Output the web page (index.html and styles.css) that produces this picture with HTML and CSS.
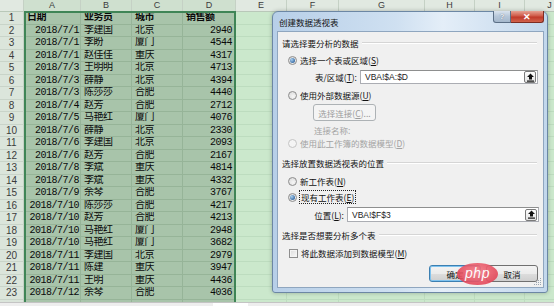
FILE: index.html
```html
<!DOCTYPE html>
<html>
<head>
<meta charset="utf-8">
<link rel="stylesheet" href="styles.css">
</head>
<body>
<div class="app">
  <div class="sheet">
    <div class="r hdr"><i class="corner"></i><i class="sel">A</i><i class="sel">B</i><i class="sel">C</i><i class="sel">D</i><i>E</i><i>F</i><i>G</i><i>H</i><i>I</i><i>J</i></div>
    <div class="r bold"><i class="rh">1</i><i class="s">日期</i><i class="s">业务员</i><i class="s">城市</i><i class="s">销售额</i><i></i><i></i><i></i><i></i><i></i><i></i></div>
    <div class="r"><i class="rh">2</i><i class="s a">2018/7/1</i><i class="s">李建国</i><i class="s">北京</i><i class="s d">2940</i><i></i><i></i><i></i><i></i><i></i><i></i></div>
    <div class="r"><i class="rh">3</i><i class="s a">2018/7/1</i><i class="s">李盼</i><i class="s">厦门</i><i class="s d">4544</i><i></i><i></i><i></i><i></i><i></i><i></i></div>
    <div class="r"><i class="rh">4</i><i class="s a">2018/7/1</i><i class="s">赵佳佳</i><i class="s">重庆</i><i class="s d">4317</i><i></i><i></i><i></i><i></i><i></i><i></i></div>
    <div class="r"><i class="rh">5</i><i class="s a">2018/7/3</i><i class="s">王明明</i><i class="s">北京</i><i class="s d">4713</i><i></i><i></i><i></i><i></i><i></i><i></i></div>
    <div class="r"><i class="rh">6</i><i class="s a">2018/7/3</i><i class="s">薛静</i><i class="s">北京</i><i class="s d">4394</i><i></i><i></i><i></i><i></i><i></i><i></i></div>
    <div class="r"><i class="rh">7</i><i class="s a">2018/7/3</i><i class="s">陈莎莎</i><i class="s">合肥</i><i class="s d">4440</i><i></i><i></i><i></i><i></i><i></i><i></i></div>
    <div class="r"><i class="rh">8</i><i class="s a">2018/7/4</i><i class="s">赵芳</i><i class="s">合肥</i><i class="s d">2712</i><i></i><i></i><i></i><i></i><i></i><i></i></div>
    <div class="r"><i class="rh">9</i><i class="s a">2018/7/5</i><i class="s">马艳红</i><i class="s">厦门</i><i class="s d">4076</i><i></i><i></i><i></i><i></i><i></i><i></i></div>
    <div class="r"><i class="rh">10</i><i class="s a">2018/7/6</i><i class="s">薛静</i><i class="s">北京</i><i class="s d">2330</i><i></i><i></i><i></i><i></i><i></i><i></i></div>
    <div class="r"><i class="rh">11</i><i class="s a">2018/7/6</i><i class="s">李建国</i><i class="s">北京</i><i class="s d">2093</i><i></i><i></i><i></i><i></i><i></i><i></i></div>
    <div class="r"><i class="rh">12</i><i class="s a">2018/7/6</i><i class="s">赵芳</i><i class="s">合肥</i><i class="s d">2167</i><i></i><i></i><i></i><i></i><i></i><i></i></div>
    <div class="r"><i class="rh">13</i><i class="s a">2018/7/8</i><i class="s">李斌</i><i class="s">重庆</i><i class="s d">4814</i><i></i><i></i><i></i><i></i><i></i><i></i></div>
    <div class="r"><i class="rh">14</i><i class="s a">2018/7/8</i><i class="s">李斌</i><i class="s">重庆</i><i class="s d">4332</i><i></i><i></i><i></i><i></i><i></i><i></i></div>
    <div class="r"><i class="rh">15</i><i class="s a">2018/7/9</i><i class="s">余琴</i><i class="s">合肥</i><i class="s d">3767</i><i></i><i></i><i></i><i></i><i></i><i></i></div>
    <div class="r"><i class="rh">16</i><i class="s a">2018/7/10</i><i class="s">陈莎莎</i><i class="s">合肥</i><i class="s d">4217</i><i></i><i></i><i></i><i></i><i></i><i></i></div>
    <div class="r"><i class="rh">17</i><i class="s a">2018/7/10</i><i class="s">赵芳</i><i class="s">合肥</i><i class="s d">4213</i><i></i><i></i><i></i><i></i><i></i><i></i></div>
    <div class="r"><i class="rh">18</i><i class="s a">2018/7/10</i><i class="s">马艳红</i><i class="s">厦门</i><i class="s d">2948</i><i></i><i></i><i></i><i></i><i></i><i></i></div>
    <div class="r"><i class="rh">19</i><i class="s a">2018/7/10</i><i class="s">马艳红</i><i class="s">厦门</i><i class="s d">3682</i><i></i><i></i><i></i><i></i><i></i><i></i></div>
    <div class="r"><i class="rh">20</i><i class="s a">2018/7/11</i><i class="s">李建国</i><i class="s">北京</i><i class="s d">2979</i><i></i><i></i><i></i><i></i><i></i><i></i></div>
    <div class="r"><i class="rh">21</i><i class="s a">2018/7/11</i><i class="s">陈建</i><i class="s">重庆</i><i class="s d">3947</i><i></i><i></i><i></i><i></i><i></i><i></i></div>
    <div class="r"><i class="rh">22</i><i class="s a">2018/7/11</i><i class="s">王明</i><i class="s">重庆</i><i class="s d">4436</i><i></i><i></i><i></i><i></i><i></i><i></i></div>
    <div class="r"><i class="rh">23</i><i class="s a">2018/7/12</i><i class="s">余琴</i><i class="s">合肥</i><i class="s d">4036</i><i></i><i></i><i></i><i></i><i></i><i></i></div>
    <div class="r"><i class="rh"></i><i class="s"></i><i class="s"></i><i class="s"></i><i class="s"></i><i></i><i></i><i></i><i></i><i></i><i></i></div>
  </div>
  <div class="footer"><span class="tab"></span></div>

  <div class="selection"></div>

  <div class="dialog">
    <div class="titlebar">
      <span class="title">创建数据透视表</span>
      <div class="tbtns"><span class="help">?</span><span class="close">✕</span></div>
    </div>
    <div class="content">
      <div class="sec s1"><span>请选择要分析的数据</span><b class="groove"></b></div>
      <div class="opt o1"><span class="radio on"></span><span>选择一个表或区域(<u>S</u>)</span></div>
      <div class="field f1"><label>表/区域(<u>T</u>):</label><div class="input">VBA!$A:$D<span class="rbtn"><svg width="9" height="9" viewBox="0 0 9 9"><path d="M4.5 0.5 L1 4 H3 V6.5 H6 V4 H8 Z" fill="#111"/><rect x="1" y="7.5" width="7" height="1.2" fill="#111"/></svg></span></div></div>
      <div class="opt o2"><span class="radio"></span><span>使用外部数据源(<u>U</u>)</span></div>
      <div class="btnrow"><span class="btn dis">选择连接(<u>C</u>)...</span></div>
      <div class="conn">连接名称:</div>
      <div class="opt dis o3"><span class="radio"></span><span>使用此工作簿的数据模型(<u>D</u>)</span></div>
      <div class="sec s2"><span>选择放置数据透视表的位置</span><b class="groove"></b></div>
      <div class="opt o4"><span class="radio"></span><span>新工作表(<u>N</u>)</span></div>
      <div class="opt o5"><span class="radio on"></span><span class="focus">现有工作表(<u>E</u>)</span></div>
      <div class="field f2"><label>位置(<u>L</u>):</label><div class="input">VBA!$F$3<span class="rbtn"><svg width="9" height="9" viewBox="0 0 9 9"><path d="M4.5 0.5 L1 4 H3 V6.5 H6 V4 H8 Z" fill="#111"/><rect x="1" y="7.5" width="7" height="1.2" fill="#111"/></svg></span></div></div>
      <div class="sec s3"><span>选择是否想要分析多个表</span><b class="groove"></b></div>
      <div class="opt o6"><span class="check"></span><span>将此数据添加到数据模型(<u>M</u>)</span></div>
      <div class="actions"><span class="btn ok">确定</span><span class="btn">取消</span></div>
      <svg class="grip" width="9" height="9" viewBox="0 0 9 9"><g fill="#9aa5b1"><rect x="7" y="1" width="1" height="1"/><rect x="5" y="3" width="1" height="1"/><rect x="7" y="3" width="1" height="1"/><rect x="3" y="5" width="1" height="1"/><rect x="5" y="5" width="1" height="1"/><rect x="7" y="5" width="1" height="1"/><rect x="1" y="7" width="1" height="1"/><rect x="3" y="7" width="1" height="1"/><rect x="5" y="7" width="1" height="1"/><rect x="7" y="7" width="1" height="1"/></g></svg>
    </div>
  </div>

  <div class="php">php</div>
</div>
</body>
</html>
```

FILE: styles.css
```css
* { box-sizing: border-box; margin: 0; padding: 0; }
html, body { width: 554px; height: 306px; overflow: hidden; background: #cbe8cc; }
body { font-family: "Noto Sans CJK SC", sans-serif; }

.app { position: relative; width: 554px; height: 306px; display: flex; flex-direction: column; }

/* ---------- sheet ---------- */
.sheet {
  height: 302px; overflow: hidden; background: #cbe8cc;
  font: 10px "Liberation Mono", "Noto Sans CJK SC", monospace;
  letter-spacing: -0.5px; color: #0a0a0a;
}
.r {
  display: grid;
  grid-template-columns: 24px 57px 51px 51px 53px 51px 52px 86px 50px 50px 50px;
  height: 12.5px;
}
.r > i {
  display: block; font-style: normal; height: 12.5px; line-height: 12px;
  border-right: 1px solid #bddcbf; border-bottom: 1px solid #bddcbf;
  white-space: nowrap; overflow: hidden; padding: 0 3px;
}
.r.hdr { height: 12px; }
.r.hdr > i {
  height: 12px; line-height: 12px; background: #e1e9e1;
  border-right-color: #c5d1c5; border-bottom-color: #b9c8b9;
  text-align: center; font: 9px "Liberation Sans", sans-serif; letter-spacing: 0; color: #3c3c3c;
}
.r.hdr > i.sel { background: #cfe0cf; }
.r > i.rh {
  background: #dbe5db; border-right-color: #c5d1c5; border-bottom-color: #c9d4c9;
  text-align: center; padding: 0; font: 10px "Liberation Sans", sans-serif;
  letter-spacing: 0; color: #3c3c3c;
}
.r > i.s { background: #a8c4aa; border-color: #96b498; }
.r > i.a { text-align: right; padding-right: 1px; }
.r > i.d { text-align: right; padding-right: 3px; }
.bold > i.s { font-weight: bold; }

.footer { height: 4px; background: #eeeeee; border-top: 1px solid #c4c4c4; display: flex; padding-left: 213px; }
.footer .tab { width: 35px; background: #fff; }

.selection {
  position: absolute; left: 24px; top: 11px; width: 212px; height: 291px;
  border: 2px solid #3f8556; border-bottom: none; pointer-events: none;
}

/* ---------- dialog ---------- */
.dialog {
  position: absolute; left: 272px; top: 11px; width: 276px; height: 282px;
  border: 1px solid #6c87a4; border-radius: 6px 6px 3px 3px;
  background: linear-gradient(to right, #b7cfe8, #cfe0f1 45%, #e4eef8 62%, #c2d7ec);
  padding: 0 3px 4px 4px;
  display: flex; flex-direction: column;
  box-shadow: 0 0 4px rgba(0, 0, 0, 0.25);
}
.titlebar { height: 19px; position: relative; display: flex; align-items: center; padding-left: 2px; }
.title { font-size: 8.5px; color: #111; line-height: 12px; }
.tbtns { position: absolute; right: 0; top: -1px; display: flex; }
.tbtns span {
  height: 12px; display: flex; align-items: center; justify-content: center;
  border: 1px solid #5b6f86; border-top: none; color: #fff;
  font: bold 8px "Liberation Sans", sans-serif;
}
.help {
  width: 18px; border-radius: 0 0 0 3px;
  background: linear-gradient(#d9e3ee, #b5c6d8 50%, #a5b8cc);
  color: #eef3f8 !important; text-shadow: 0 0 1px #4d5d70;
}
.close {
  width: 33px; border-left: none !important; border-radius: 0 0 3px 0;
  border-color: #7d2c22 !important;
  background: linear-gradient(#e6a293, #cf5a48 45%, #c0392a 55%, #d1634c);
  font-size: 9px !important;
}

.content {
  position: relative; flex: 1; background: #f0f0f0; border: 1px solid #8fa6bf;
  font-size: 8.5px; line-height: 12px; color: #111;
  display: flex; flex-direction: column;
}
.content u { text-decoration: underline; text-underline-offset: 1px; }

.sec { display: flex; align-items: center; height: 12px; padding-left: 4px; padding-right: 6px; }
.sec .groove { flex: 1; height: 2px; border-top: 1px solid #d5d5d5; border-bottom: 1px solid #fff; margin-left: 3px; }
.s1 { margin-top: 5px; }
.s2 { margin-top: 8px; }
.s3 { margin-top: 7px; }

.opt { display: flex; align-items: center; height: 12px; padding-left: 10px; gap: 3px; }
.o1 { margin-top: 5px; }
.o2 { margin-top: 5px; }
.o3 { margin-top: 1px; }
.o4 { margin-top: 6px; }
.o5 { margin-top: 4px; }
.o6 { margin-top: 6px; padding-left: 11px; }

.radio {
  width: 9px; height: 9px; border-radius: 50%; border: 1px solid #8c8c8c;
  background: radial-gradient(circle at 60% 65%, #f6f6f6, #d8d8d8);
  display: flex; align-items: center; justify-content: center;
}
.radio.on::after {
  content: ""; width: 5px; height: 5px; border-radius: 50%;
  background: radial-gradient(circle at 35% 35%, #a9d0f0, #3d6fa7 70%, #274f7f);
}
.opt.dis { color: #a3a3a3; }
.opt.dis .radio { border-color: #c4c4c4; background: #f4f4f4; }

.check {
  width: 9px; height: 9px; border: 1px solid #8e8e8e;
  background: linear-gradient(135deg, #dcdcdc, #fafafa);
  box-shadow: inset 0 0 0 1px #f4f4f4;
}
.focus { outline: 1px dotted #222; outline-offset: 0; padding: 0 1px; }

.field { display: flex; align-items: center; }
.field label { text-align: right; padding-right: 3px; }
.f1 { margin-top: 4px; height: 14px; }
.f1 label { width: 82px; }
.f1 .input { width: 178px; }
.f2 { margin-top: 4px; height: 15px; }
.f2 label { width: 69px; }
.f2 .input { width: 192px; }
.input {
  height: 100%; background: #fff; border: 1px solid #abadb3; border-top-color: #8e8f8f;
  display: flex; align-items: center; padding-left: 4px; position: relative;
  font-family: "Liberation Sans", sans-serif; font-size: 8.5px; color: #222;
}
.rbtn {
  position: absolute; right: 1px; top: 50%; transform: translateY(-50%);
  width: 12px; height: 12px; border: 1px solid #7a7a7a; border-radius: 2px;
  background: linear-gradient(#fdfdfd, #e3e3e3);
  display: flex; align-items: center; justify-content: center;
}

.btnrow { margin-top: 3px; padding-left: 35px; display: flex; }
.btn {
  height: 17px; display: flex; align-items: center; justify-content: center;
  border: 1px solid #707070; border-radius: 3px;
  background: linear-gradient(#f3f3f3, #ebebeb 50%, #dddddd 51%, #cfcfcf);
}
.btn.dis { width: 63px; border-color: #adb2b5; background: #f4f4f4; color: #9c9c9c; }
.conn { margin-top: 3px; padding-left: 36px; color: #a3a3a3; height: 12px; }

.actions { margin-top: 6px; display: flex; justify-content: flex-end; gap: 5px; padding-right: 5px; }
.actions .btn { width: 52px; }
.actions .btn.ok { border-color: #3c7fb1; box-shadow: inset 0 0 0 1px #7fc3ef; }

.grip { position: absolute; right: 1px; bottom: 1px; }

.php {
  position: absolute; left: 457px; top: 263px; width: 41px; height: 22px; border-radius: 50%;
  background: radial-gradient(ellipse at 50% 40%, #f57b86, #e4485a 70%, #d93b4e);
  color: #fff; font: italic 14px "Liberation Sans", sans-serif; letter-spacing: 0.5px;
  display: flex; align-items: center; justify-content: center; padding-bottom: 2px;
  opacity: 0.9;
}
```
